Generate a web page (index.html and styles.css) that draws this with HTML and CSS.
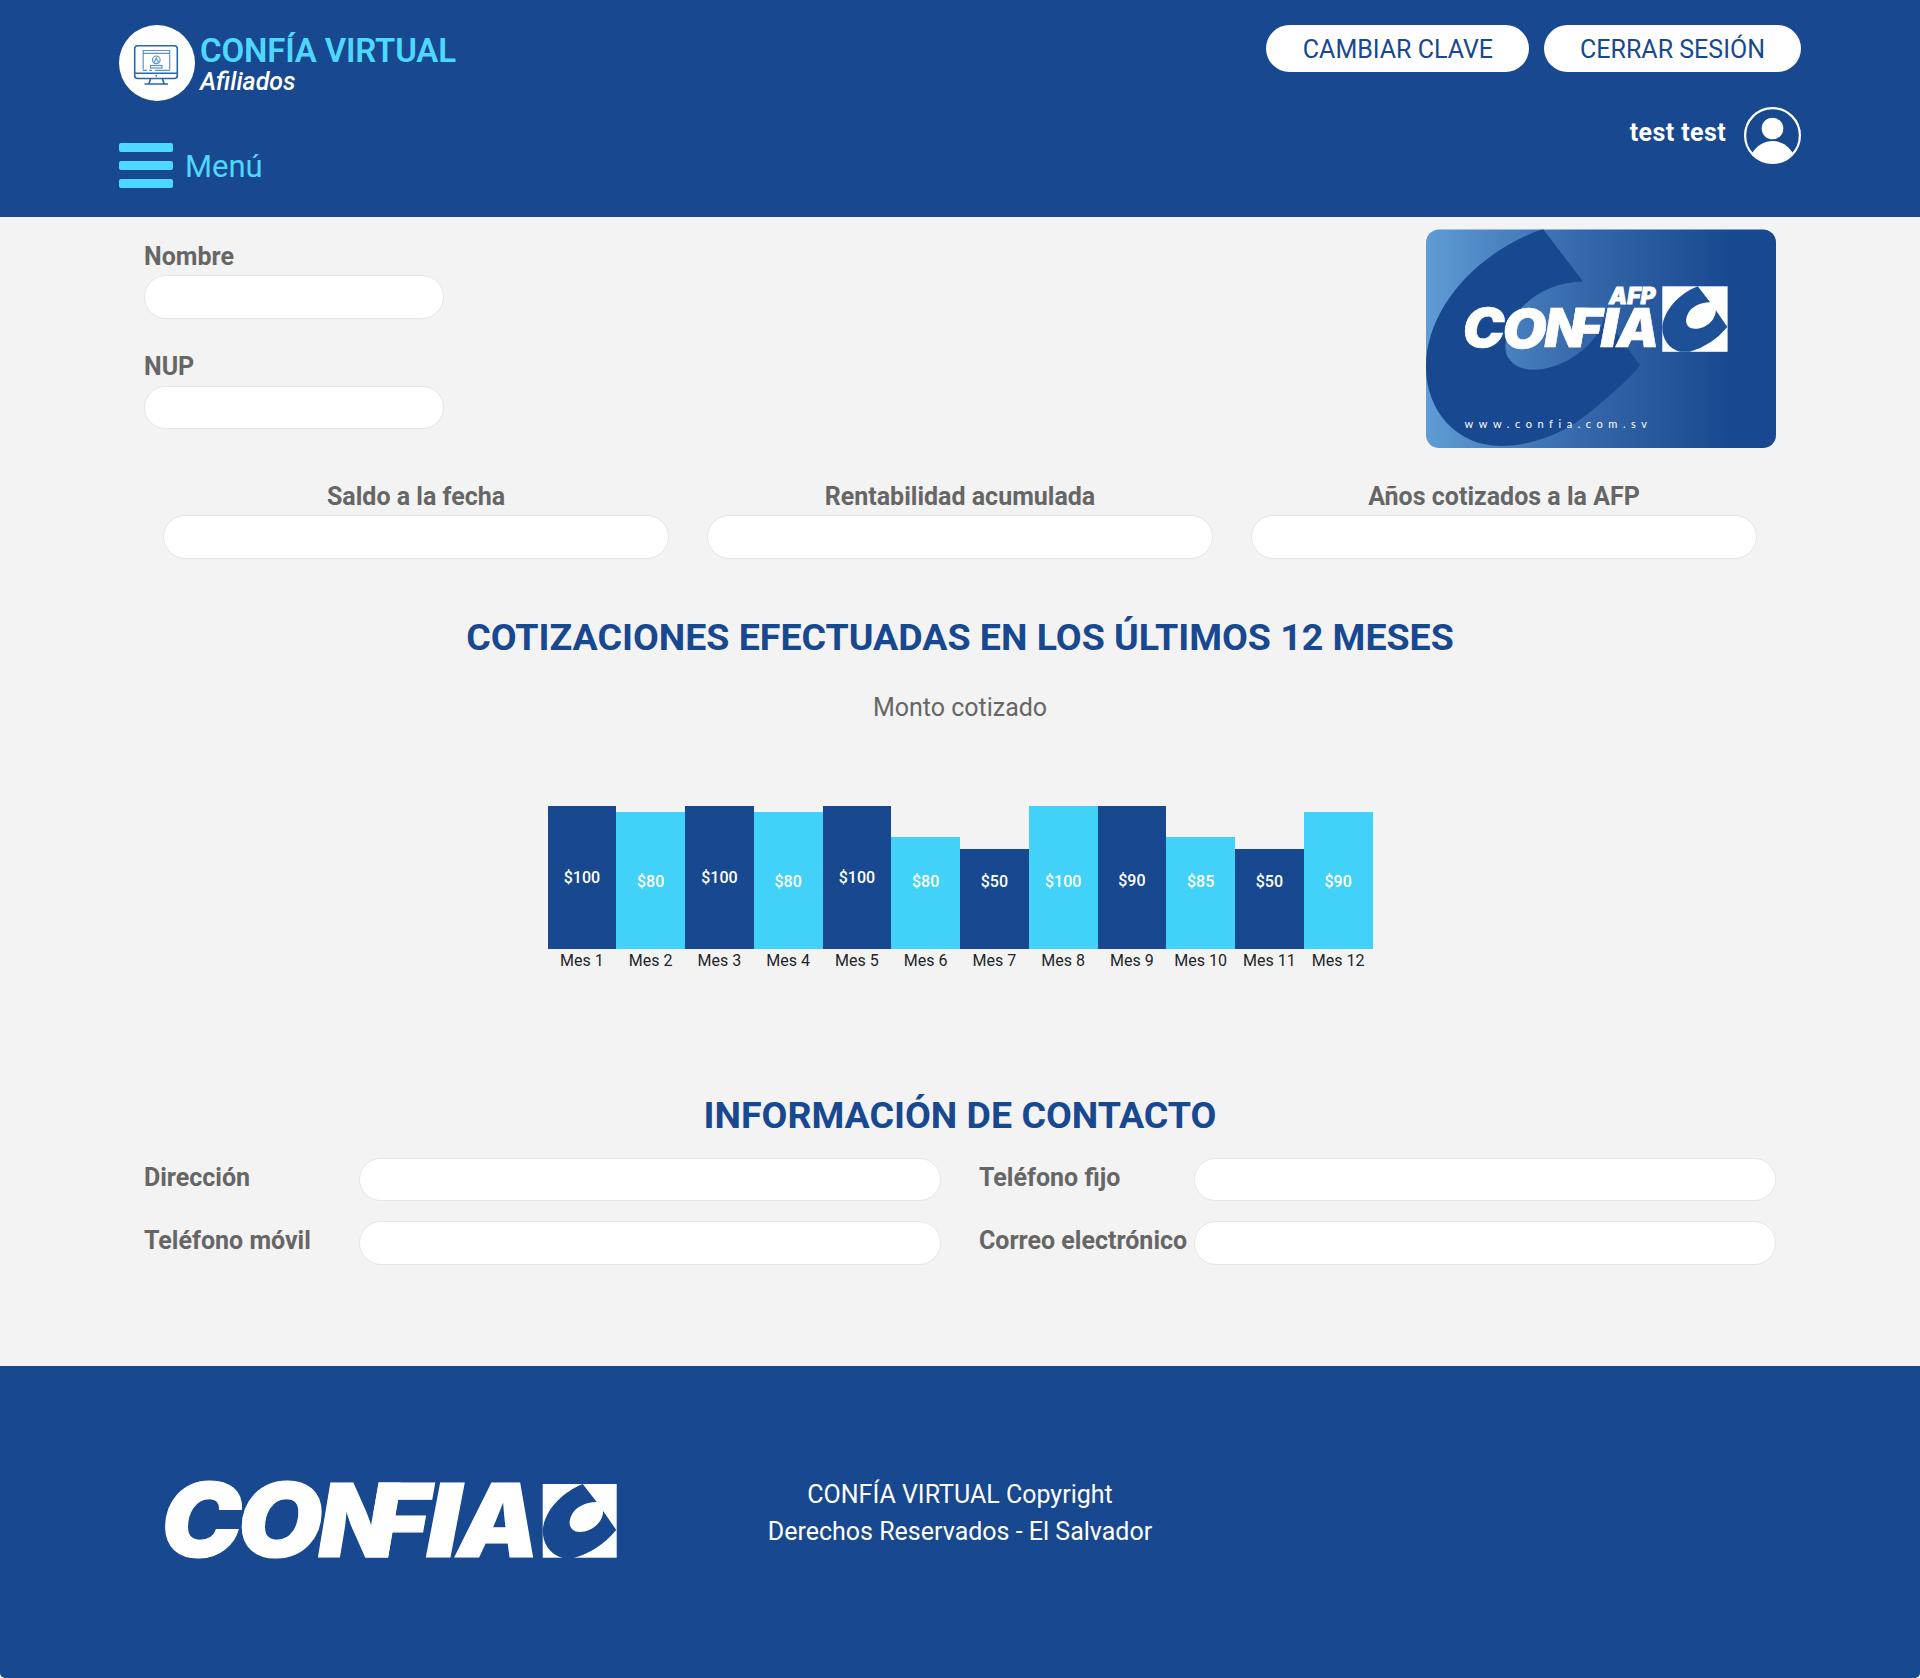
FILE: index.html
```html
<!DOCTYPE html>
<html lang="es">
<head>
<meta charset="utf-8">
<title>Confía Virtual</title>
<link rel="stylesheet" href="styles.css">
</head>
<body>
<header class="header">
  <div class="header-left">
    <div class="brand">
      <svg class="brand-icon" viewBox="0 0 76 76">
        <circle cx="38" cy="38" r="38" fill="#fff"/>
        <g fill="none" stroke="#2468ad" stroke-width="1.6">
          <rect x="15.700" y="20.700" width="42.600" height="32.800" rx="3"/>
          <path d="M16 48.300h42M31.500 54l-1.500 4.500M43.500 54l1.500 4.500M25.500 59h23.500"/>
          <path d="M36.500 50.800h1.500"/>
        </g>
        <g fill="none" stroke="#5c93c8" stroke-width="1.200">
          <path d="M24.200 44.500V25.500h26.500v19M24 28.300h27M24 45.300h4M30 45.300h3M36 45.300h15"/>
          <circle cx="37.300" cy="34.800" r="3.800"/>
          <path d="M35 37.500l2.300-4.500 2.300 4.500"/>
          <rect x="31.500" y="40.500" width="11.500" height="2.500"/>
        </g>
      </svg>
      <div class="brand-text">
        <div class="brand-name">CONFÍA VIRTUAL</div>
        <div class="brand-sub">Afiliados</div>
      </div>
    </div>
    <div class="menu"><span class="burger"><i></i><i></i><i></i></span><span class="menu-label">Menú</span></div>
  </div>
  <div class="header-right">
    <div class="actions"><a class="btn btn-wide">CAMBIAR CLAVE</a><a class="btn">CERRAR SESIÓN</a></div>
    <div class="user">
      <span class="user-name">test test</span>
      <svg class="avatar" viewBox="0 0 57 57">
        <circle cx="28.500" cy="28.500" r="27.400" fill="none" stroke="#fff" stroke-width="2.200"/>
        <circle cx="28.500" cy="21.500" r="10.800" fill="#fff"/>
        <path d="M8.200 46C18 30 39 30 48.800 46A26 26 0 0 1 8.200 46z" fill="#fff"/>
      </svg>
    </div>
  </div>
</header>

<main class="main">
  <section class="profile">
    <div class="profile-fields">
      <div class="field"><label>Nombre</label><div class="input"></div></div>
      <div class="field"><label>NUP</label><div class="input"></div></div>
    </div>
    <svg class="card" viewBox="0 0 350 219">
      <defs>
        <linearGradient id="sky"><stop offset="0" stop-color="#5f9cd5"/><stop offset=".45" stop-color="#3567aa"/><stop offset=".88" stop-color="#18488f"/></linearGradient>
        <clipPath id="round"><rect y=".4" width="350" height="218.600" rx="13"/></clipPath>
      </defs>
      <g clip-path="url(#round)">
        <rect width="350" height="219" fill="url(#sky)"/>
        <path fill="#18488f" d="M117 0L157 52.500C125 53 99 69 87 91C78 109 77 124 84 131C91 140 103 142 117 140C147 135 176 109 178 88L214 136Q205 149 170 178C143 203 107 217 75 217C30 217 0 181 0 138C0 78 53 22 117 0z"/>
      </g>
      <use href="#wordmark" transform="translate(37.800 78) scale(.519 .525)"/>
      <text class="wordmark" transform="translate(183 75.300)" font-size="23.500" stroke-width=".8" textLength="46.500" lengthAdjust="spacingAndGlyphs">AFP</text>
      <rect x="236.300" y="57.300" width="65.300" height="65.500" fill="#fff"/>
      <path transform="translate(236.300 57.300) scale(.885)" fill="#1e5098" d="M40 0L54 18C42 18 32 24 29 31C25 39 27 45 33 47.500C45 50 60 41 60.500 27L73.500 46Q56 67 31 74H20C7 70 0 60 0 46C2 26 20 8 40 0z"/>
      <text x="38.500" y="199" class="card-url">www.confia.com.sv</text>
    </svg>
  </section>

  <section class="stats">
    <div class="field"><label>Saldo a la fecha</label><div class="input"></div></div>
    <div class="field"><label>Rentabilidad acumulada</label><div class="input"></div></div>
    <div class="field"><label>Años cotizados a la AFP</label><div class="input"></div></div>
  </section>

  <h2 class="title">COTIZACIONES EFECTUADAS EN LOS ÚLTIMOS 12 MESES</h2>
  <p class="caption">Monto cotizado</p>
  <div class="chart">
    <div class="col"><div class="bar h143 lift">$100</div><span>Mes 1</span></div>
    <div class="col"><div class="bar h137">$80</div><span>Mes 2</span></div>
    <div class="col"><div class="bar h143 lift">$100</div><span>Mes 3</span></div>
    <div class="col"><div class="bar h137">$80</div><span>Mes 4</span></div>
    <div class="col"><div class="bar h143 lift">$100</div><span>Mes 5</span></div>
    <div class="col"><div class="bar h112">$80</div><span>Mes 6</span></div>
    <div class="col"><div class="bar h100">$50</div><span>Mes 7</span></div>
    <div class="col"><div class="bar h143">$100</div><span>Mes 8</span></div>
    <div class="col"><div class="bar h143 nudge">$90</div><span>Mes 9</span></div>
    <div class="col"><div class="bar h112">$85</div><span>Mes 10</span></div>
    <div class="col"><div class="bar h100">$50</div><span>Mes 11</span></div>
    <div class="col"><div class="bar h137">$90</div><span>Mes 12</span></div>
  </div>

  <h2 class="title contact-title">INFORMACIÓN DE CONTACTO</h2>
  <section class="contact">
    <div class="row"><label>Dirección</label><div class="input"></div></div>
    <div class="row"><label>Teléfono fijo</label><div class="input"></div></div>
    <div class="row"><label>Teléfono móvil</label><div class="input"></div></div>
    <div class="row"><label>Correo electrónico</label><div class="input"></div></div>
  </section>
</main>

<footer class="footer">
  <svg class="footer-logo" viewBox="0 0 454 80">
    <g id="wordmark" class="wordmark" font-size="102" stroke-width="1.200">
      <text transform="translate(-2 77) scale(1.055 1.010)">C</text>
      <text transform="translate(74.400 77.300) scale(1.075 1.010)">O</text>
      <text y="77" x="155.500">N</text>
      <text transform="translate(203 77) scale(1.060 1)">F</text>
      <text transform="translate(263.500 77) scale(1.150 1)">I</text>
      <text transform="translate(294.500 77) scale(1.010 1)">A</text>
    </g>
    <rect x="379.700" y="4" width="74" height="73.700" fill="#fff"/>
    <path transform="translate(379.700 4)" fill="#18488f" d="M40 0L54 18C42 18 32 24 29 31C25 39 27 45 33 47.500C45 50 60 41 60.500 27L73.500 46Q56 67 31 74H20C7 70 0 60 0 46C2 26 20 8 40 0z"/>
  </svg>
  <p class="copyright">CONFÍA VIRTUAL Copyright<br>Derechos Reservados - El Salvador</p>
</footer>
</body>
</html>
```
FILE: styles.css
```css
* { box-sizing: border-box; }
html { background: #fff; }
body {
  margin: 0;
  color: #666;
  font: 25px/37.5px Roboto, sans-serif;
}
p, h2 { margin: 0; }

.header {
  display: flex;
  justify-content: space-between;
  height: 217px;
  padding: 25px 119px 0;
  background: #18488f;
  color: #fff;
}
.brand { display: flex; gap: 5px; height: 76px; }
.brand-icon { width: 76px; height: 76px; }
.brand-name {
  margin-top: 7px;
  color: #4fd8ff;
  font-size: 33px;
  font-weight: 600;
  letter-spacing: -.16px;
  line-height: 38px;
}
.brand-sub { padding-top: 2px; font-size: 25px; font-weight: 500; font-style: italic; line-height: 20px; }
.menu {
  display: flex;
  align-items: center;
  gap: 12px;
  height: 45px;
  margin-top: 42px;
  color: #4fd8ff;
  font-size: 31px;
}
.menu-label { padding-top: 2px; }
.burger { display: flex; flex-direction: column; gap: 9px; width: 54px; }
.burger i { height: 9px; border-radius: 2px; background: #4fd8ff; }

.header-right { display: flex; flex-direction: column; align-items: flex-end; }
.actions { display: flex; gap: 15px; }
.btn {
  height: 47px;
  padding: 6px 36px 4px;
  border-radius: 24px;
  background: #fff;
  color: #18488f;
}
.btn-wide { padding-left: 36.600px; }
.user { display: flex; gap: 18px; margin-top: 35px; }
.user-name { margin-top: 7px; font-weight: 700; letter-spacing: .4px; }
.avatar { width: 57px; height: 57px; }

.main { height: 1149px; padding: 12px 144px 0; background: #f3f3f3; }
.profile { display: flex; justify-content: space-between; height: 248.500px; }
.profile-fields { display: flex; flex-direction: column; gap: 29.500px; width: 300px; padding-top: 8.500px; }
.card { width: 350px; height: 219px; }
label { display: block; height: 37.500px; font-weight: 700; }
.input {
  height: 43.500px;
  border: 1px solid #e6e6e6;
  border-radius: 22px;
  background: #fff;
}
.stats { display: grid; grid-template-columns: repeat(3, 1fr); text-align: center; }
.stats .field { padding: 0 19px; }

.title {
  margin-top: 56px;
  color: #18488f;
  font-size: 37.500px;
  font-weight: 700;
  line-height: 45px;
  text-align: center;
}
.caption { margin-top: 29.500px; text-align: center; }
.chart {
  display: flex;
  align-items: flex-end;
  width: 825px;
  margin: 79.200px auto 0;
  color: #212529;
  font-size: 16px;
  line-height: 24px;
  text-align: center;
}
.col { flex: 1; }
.col span { display: block; }
.bar { display: flex; justify-content: center; align-items: flex-end; padding-bottom: 55px; background: #18488f; color: #fff; font-weight: 500; }
.col:nth-child(even) .bar { background: #42d1f8; }
.bar.lift { padding-bottom: 59px; }
.bar.nudge { padding-bottom: 56px; }
.h143 { height: 143px; }
.h137 { height: 137px; }
.h112 { height: 112px; }
.h100 { height: 100px; }

.contact-title { margin-top: 120.800px; }
.contact { display: grid; grid-template-columns: 1fr 1fr; gap: 20px 38px; margin-top: 19.500px; }
.row { display: flex; }
.row label { width: 215px; padding-top: .700px; white-space: nowrap; }
.row .input { flex: 1; }

.footer {
  display: flex;
  height: 312px;
  padding: 114px 163px 0;
  border-radius: 0 0 5px 5px;
  background: #18488f;
  color: #fff;
}
.footer-logo { width: 454px; height: 80px; overflow: visible; }
.copyright { width: 686px; margin-top: -4px; line-height: 37px; text-align: center; }

.wordmark { fill: #fff; stroke: #fff; font-family: Inter, sans-serif; font-weight: 900; font-style: italic; }
.card-url {
  fill: #fff;
  font-family: Lato, sans-serif;
  font-size: 11px;
  font-variant-ligatures: none;
  letter-spacing: 5.550px;
}
```
